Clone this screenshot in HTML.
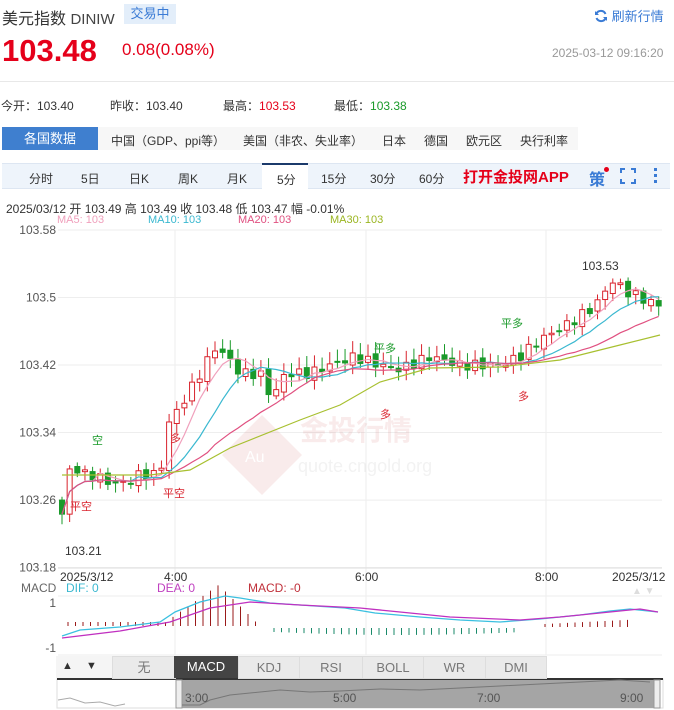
<!DOCTYPE html><html><head><meta charset="utf-8"><style>
body{margin:0;width:674px;height:710px;overflow:hidden;background:#fff;font-family:"Liberation Sans","Noto Sans CJK SC",sans-serif;position:relative;color:#333}
.a{position:absolute;white-space:nowrap}
</style></head><body>
<div class="a" style="left:2px;top:5px;font-size:16px;color:#333">美元指数 <span style="font-size:15px;color:#444">DINIW</span></div>
<div class="a" style="left:124px;top:4px;width:52px;height:20px;background:#e3eefa;color:#3a7bd5;font-size:13px;line-height:20px;text-align:center">交易中</div>
<div class="a" style="left:594px;top:6px;font-size:13px;color:#3a7bd5"><svg width="14" height="14" viewBox="0 0 14 14" style="vertical-align:-2px"><path d="M11.5 5A5 5 0 0 0 2.5 4.5M2.5 9A5 5 0 0 0 11.5 9.5" stroke="#3a7bd5" stroke-width="2" fill="none"/><path d="M1 2v4h4zM13 12V8H9z" fill="#3a7bd5"/></svg> 刷新行情</div>
<div class="a" style="left:2px;top:33px;font-size:31px;font-weight:bold;color:#e5001a">103.48</div>
<div class="a" style="left:122px;top:40px;font-size:17px;color:#e5001a">0.08(0.08%)</div>
<div class="a" style="left:552px;top:46px;font-size:12px;color:#999">2025-03-12 09:16:20</div>
<div class="a" style="left:0;top:81px;width:674px;height:1px;background:#e8e8e8"></div>
<div class="a" style="left:1px;top:97px;font-size:12px">今开：103.40</div>
<div class="a" style="left:110px;top:97px;font-size:12px">昨收：103.40</div>
<div class="a" style="left:223px;top:97px;font-size:12px">最高：<span style="color:#e5001a">103.53</span></div>
<div class="a" style="left:334px;top:97px;font-size:12px">最低：<span style="color:#1a9a2a">103.38</span></div>
<div class="a" style="left:2px;top:127px;width:96px;height:23px;background:#3f7fcf;color:#fff;font-size:13px;line-height:23px;text-align:center">各国数据</div>
<div class="a" style="left:98px;top:127px;width:480px;height:23px;background:#f7f7f7"></div>
<div class="a" style="left:111px;top:132px;font-size:12px">中国（GDP、ppi等）</div>
<div class="a" style="left:243px;top:132px;font-size:12px">美国（非农、失业率）</div>
<div class="a" style="left:382px;top:132px;font-size:12px">日本</div>
<div class="a" style="left:424px;top:132px;font-size:12px">德国</div>
<div class="a" style="left:466px;top:132px;font-size:12px">欧元区</div>
<div class="a" style="left:520px;top:132px;font-size:12px">央行利率</div>
<div class="a" style="left:2px;top:163px;width:668px;height:24px;background:#eef4fb;border-top:1px solid #dde6f2;border-bottom:1px solid #dde6f2"></div>
<div class="a" style="left:262px;top:163px;width:46px;height:26px;background:#fff;border-top:2px solid #1b3a6b"></div>
<div class="a" style="top:170px;font-size:12px;left:29px">分时</div>
<div class="a" style="top:170px;font-size:12px;left:81px">5日</div>
<div class="a" style="top:170px;font-size:12px;left:129px">日K</div>
<div class="a" style="top:170px;font-size:12px;left:178px">周K</div>
<div class="a" style="top:170px;font-size:12px;left:227px">月K</div>
<div class="a" style="top:171px;font-size:12px;left:277px">5分</div>
<div class="a" style="top:170px;font-size:12px;left:321px">15分</div>
<div class="a" style="top:170px;font-size:12px;left:370px">30分</div>
<div class="a" style="top:170px;font-size:12px;left:419px">60分</div>
<div class="a" style="top:166px;font-size:15px;left:463px;color:#e5001a;font-weight:bold">打开金投网APP</div>
<div class="a" style="top:166px;font-size:16px;left:589px;color:#3a7bd5;font-weight:bold">策</div>
<div class="a" style="left:604px;top:167px;width:5px;height:5px;border-radius:50%;background:#e5001a"></div>
<svg class="a" style="left:620px;top:168px" width="16" height="16"><path d="M1 5V1h4M11 1h4v4M15 11v4h-4M5 15H1v-4" stroke="#3a7bd5" stroke-width="2" fill="none"/></svg>
<div class="a" style="left:654px;top:168px;width:3px;height:3px;background:#3a7bd5;box-shadow:0 6px #3a7bd5,0 12px #3a7bd5"></div>
<div class="a" style="left:6px;top:200px;font-size:12px">2025/03/12 开 103.49 高 103.49 收 103.48 低 103.47 幅 -0.01%</div>
<div class="a" style="top:214px;font-size:11px;left:57px;color:#f0a0bc">MA5: 103</div>
<div class="a" style="top:214px;font-size:11px;left:148px;color:#3ab8d0">MA10: 103</div>
<div class="a" style="top:214px;font-size:11px;left:238px;color:#e05080">MA20: 103</div>
<div class="a" style="top:214px;font-size:11px;left:330px;color:#9ab520">MA30: 103</div>
<svg id="ch" class="a" style="left:0;top:0" width="674" height="710"></svg>
<div class="a" style="left:56px;top:656px;width:490px;height:22px;background:#f5f5f5"></div>
<div class="a" style="left:62px;top:660px;font-size:11px">▲</div>
<div class="a" style="left:86px;top:660px;font-size:11px">▼</div>
<div class="a" style="left:112px;top:656px;width:62px;height:21px;background:#eaeaea;border:1px solid #ddd;text-align:center;font-size:13px;line-height:21px;color:#777">无</div>
<div class="a" style="left:174px;top:656px;width:64px;height:22px;background:#444;color:#fff;text-align:center;font-size:13px;line-height:22px">MACD</div>
<div class="a" style="left:238px;top:656px;width:60px;height:21px;background:#eaeaea;border:1px solid #ddd;text-align:center;font-size:13px;line-height:21px;color:#777">KDJ</div>
<div class="a" style="left:299px;top:656px;width:62px;height:21px;background:#eaeaea;border:1px solid #ddd;text-align:center;font-size:13px;line-height:21px;color:#777">RSI</div>
<div class="a" style="left:362px;top:656px;width:60px;height:21px;background:#eaeaea;border:1px solid #ddd;text-align:center;font-size:13px;line-height:21px;color:#777">BOLL</div>
<div class="a" style="left:423px;top:656px;width:61px;height:21px;background:#eaeaea;border:1px solid #ddd;text-align:center;font-size:13px;line-height:21px;color:#777">WR</div>
<div class="a" style="left:485px;top:656px;width:60px;height:21px;background:#eaeaea;border:1px solid #ddd;text-align:center;font-size:13px;line-height:21px;color:#777">DMI</div>
<script>
var s=document.getElementById('ch'),h='';
function Y(p){return 230+(103.58-p)*844}
[103.58,103.5,103.42,103.34,103.26,103.18].forEach(function(p){var y=Y(p);h+='<line x1="58" x2="662" y1="'+y+'" y2="'+y+'" stroke="#eee"/><text x="56" y="'+(y+4)+'" font-size="12" fill="#555" text-anchor="end">'+p+'</text>'});
[175,366,546].forEach(function(x){h+='<line x1="'+x+'" x2="'+x+'" y1="230" y2="655" stroke="#eee"/>'});
h+='<line x1="58" x2="662" y1="568" y2="568" stroke="#ddd"/>';
h+='<g opacity="0.1"><path d="M222 455l40-40 40 40-40 40z" fill="#c44"/><text x="245" y="462" font-size="16" fill="#fff">Au</text><text x="300" y="440" font-size="28" fill="#c44" font-weight="bold">金投行情</text><text x="298" y="472" font-size="18" fill="#888">quote.cngold.org</text></g>';
var K=[[63,103.25],[72,103.31],[80,103.29],[95,103.29],[110,103.28],[125,103.28],[140,103.29],[160,103.29],[168,103.35],[185,103.38],[200,103.41],[215,103.44],[228,103.43],[240,103.41],[260,103.41],[272,103.38],[285,103.41],[310,103.41],[330,103.42],[355,103.43],[380,103.42],[400,103.415],[430,103.43],[460,103.42],[500,103.42],[520,103.43],[540,103.45],[570,103.47],[595,103.49],[612,103.52],[630,103.505],[660,103.49]];
function P(x){for(var i=1;i<K.length;i++)if(x<=K[i][0]){var a=K[i-1],b=K[i];return a[1]+(b[1]-a[1])*(x-a[0])/(b[0]-a[0])}return 103.49}
var c=[],xs=[],o=103.26;
for(var x=62,i=0;x<=660;x+=7.65,i++){var cl=P(x)+Math.sin(i*2.7)*0.006;xs.push(x);c.push([o,cl]);o=cl+Math.sin(i*1.3)*0.003}
c.forEach(function(d,i){var x=xs[i],op=d[0],cl=d[1],up=cl>=op,col=up?'#d9232d':'#1a9a2a',hi=Math.max(op,cl)+0.004+Math.abs(Math.sin(i*3.1))*0.01,lo=Math.min(op,cl)-0.004-Math.abs(Math.cos(i*2.3))*0.008;
h+='<line x1="'+x+'" x2="'+x+'" y1="'+Y(hi)+'" y2="'+Y(lo)+'" stroke="'+col+'"/>';var t=Y(Math.max(op,cl)),bh=Math.max(1,Math.abs(Y(op)-Y(cl)));
h+='<rect x="'+(x-2.5)+'" y="'+t+'" width="5" height="'+bh+'" fill="'+(up?'#fff':col)+'" stroke="'+col+'"/>'});
function ma(n,col){var pts=[];for(var i=0;i<c.length;i++){var k=Math.min(n,i+1),s2=0;for(var j=i-k+1;j<=i;j++)s2+=c[j][1];pts.push(xs[i]+','+Y(s2/k))}h+='<polyline points="'+pts.join(' ')+'" fill="none" stroke="'+col+'" stroke-width="1.2"/>'}
ma(5,'#f0a0bc');ma(10,'#3ab8d0');ma(20,'#e05080');
h+='<polyline points="62,475 150,475 190,470 230,448 300,420 340,405 380,382 430,368 500,367 560,360 620,345 660,335" fill="none" stroke="#a8c030" stroke-width="1.2"/>';
h+='<text x="582" y="270" font-size="12" fill="#333">103.53</text><text x="65" y="555" font-size="12" fill="#333">103.21</text>';
var L=[[70,510,'平空','#d9232d'],[163,497,'平空','#d9232d'],[170,442,'多','#d9232d'],[380,418,'多','#d9232d'],[518,400,'多','#d9232d'],[92,444,'空','#1a9a2a'],[374,352,'平多','#1a9a2a'],[501,327,'平多','#1a9a2a']];
L.forEach(function(l){h+='<text x="'+l[0]+'" y="'+l[1]+'" font-size="11" fill="'+l[3]+'">'+l[2]+'</text>'});
h+='<text x="60" y="581" font-size="12" fill="#333">2025/3/12</text><text x="164" y="581" font-size="12" fill="#333">4:00</text><text x="355" y="581" font-size="12" fill="#333">6:00</text><text x="535" y="581" font-size="12" fill="#333">8:00</text><text x="612" y="581" font-size="12" fill="#333">2025/3/12</text>';
h+='<text x="21" y="592" font-size="12" fill="#666">MACD</text><text x="66" y="592" font-size="12" fill="#3ab8d0">DIF: 0</text><text x="157" y="592" font-size="12" fill="#c040c0">DEA: 0</text><text x="248" y="592" font-size="12" fill="#c0303a">MACD: -0</text><text x="632" y="594" font-size="10" fill="#ddd">▲ ▼</text>';
h+='<line x1="58" x2="662" y1="596" y2="596" stroke="#eee"/><line x1="58" x2="662" y1="655" y2="655" stroke="#eee"/><text x="56" y="607" font-size="12" fill="#555" text-anchor="end">1</text><text x="56" y="652" font-size="12" fill="#555" text-anchor="end">-1</text>';
for(var x=68;x<262;x+=7.5){var v=x<165?4:(x<220?(x-160)*0.7:Math.max(1,(260-x)*1));h+='<line x1="'+x+'" x2="'+x+'" y1="'+(626-v)+'" y2="626" stroke="#9a1a1a"/>'}
for(var x=274;x<520;x+=7.5){var v=4+Math.sin((x-274)/80)*3;h+='<line x1="'+x+'" x2="'+x+'" y1="628" y2="'+(628+v)+'" stroke="#1a8a6a"/>'}
for(var x=545;x<630;x+=7.5){var v=3+(x-545)/20;h+='<line x1="'+x+'" x2="'+x+'" y1="'+(627-v)+'" y2="627" stroke="#9a1a1a"/>'}
h+='<polyline points="62,636 80,630 120,627 160,622 175,612 200,602 225,596 240,598 270,603 300,605 345,608 375,613 420,617 460,620 500,622 540,619 580,615 610,611 630,609 658,612" fill="none" stroke="#3ac0e0" stroke-width="1.3"/>';
h+='<polyline points="62,638 120,631 170,622 210,608 250,602 300,605 360,608 400,612 450,617 520,620 560,617 600,613 640,609 658,612" fill="none" stroke="#c030c0" stroke-width="1.3"/>';
h+='<rect x="57" y="679" width="606" height="29" fill="#fff" stroke="#ddd"/><line x1="57" x2="663" y1="679" y2="679" stroke="#333" stroke-width="2"/><rect x="177" y="680" width="478" height="28" fill="#a5a5a5"/><rect x="176" y="680" width="6" height="28" fill="#eee" stroke="#999"/><rect x="654" y="680" width="6" height="28" fill="#eee" stroke="#999"/>';
h+='<polyline points="58,700 70,698 85,703 100,702 115,706 125,704" fill="none" stroke="#aaa"/><polyline points="182,705 200,705 210,700 230,695 250,693 280,690 310,692 340,691 380,689 420,690 460,688 500,686 540,684 580,682 620,680 650,682" fill="none" stroke="#777"/>';
h+='<text x="185" y="702" font-size="12" fill="#555">3:00</text><text x="333" y="702" font-size="12" fill="#555">5:00</text><text x="477" y="702" font-size="12" fill="#555">7:00</text><text x="620" y="702" font-size="12" fill="#555">9:00</text>';
s.innerHTML=h;
</script>
</body></html>
